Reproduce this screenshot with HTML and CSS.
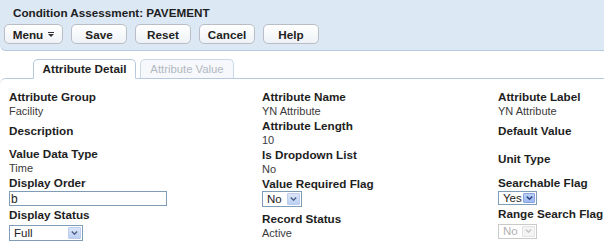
FILE: index.html
```html
<!DOCTYPE html>
<html lang="en">
<head>
    <meta charset="UTF-8">
    <title>Condition Assessment: PAVEMENT</title>
    <link rel="stylesheet" href="styles.css">
</head>
<body>
    <div class="header">
        <div class="title">Condition Assessment: PAVEMENT</div>
        <div class="toolbar">
            <button class="btn menu">Menu
                <svg width="6" height="5" viewBox="0 0 6 5"><rect x="0" y="0" width="6" height="1" fill="#333"/><polygon points="0,2 6,2 3,5" fill="#333"/></svg>
            </button>
            <button class="btn">Save</button>
            <button class="btn">Reset</button>
            <button class="btn">Cancel</button>
            <button class="btn">Help</button>
        </div>
    </div>

    <div class="tabs">
        <div class="tab active">Attribute Detail</div>
        <div class="tab off">Attribute Value</div>
    </div>

    <div class="panel">
        <!-- 左列 -->
        <div class="col">
            <div class="field">
                <div class="label">Attribute Group</div>
                <div class="value">Facility</div>
            </div>
            <div class="field gap5">
                <div class="label">Description</div>
            </div>
            <div class="field gap10">
                <div class="label">Value Data Type</div>
                <div class="value">Time</div>
            </div>
            <div class="field">
                <div class="label">Display Order</div>
                <input class="text-input" type="text" value="b">
            </div>
            <div class="field gap2">
                <div class="label">Display Status</div>
                <div class="select status">
                    <span class="select-value">Full</span>
                    <span class="select-arrow"><svg width="7" height="4" viewBox="0 0 7 4"><polyline points="0.8,0.6 3.5,3.2 6.2,0.6" fill="none" stroke="#4c5f85" stroke-width="1.4"/></svg></span>
                </div>
            </div>
        </div>

        <!-- 中列 -->
        <div class="col">
            <div class="field">
                <div class="label">Attribute Name</div>
                <div class="value">YN Attribute</div>
            </div>
            <div class="field">
                <div class="label">Attribute Length</div>
                <div class="value">10</div>
            </div>
            <div class="field">
                <div class="label">Is Dropdown List</div>
                <div class="value">No</div>
            </div>
            <div class="field">
                <div class="label">Value Required Flag</div>
                <div class="select required">
                    <span class="select-value">No</span>
                    <span class="select-arrow"><svg width="7" height="4" viewBox="0 0 7 4"><polyline points="0.8,0.6 3.5,3.2 6.2,0.6" fill="none" stroke="#4c5f85" stroke-width="1.4"/></svg></span>
                </div>
            </div>
            <div class="field gap5">
                <div class="label">Record Status</div>
                <div class="value">Active</div>
            </div>
        </div>

        <!-- 右列 -->
        <div class="col">
            <div class="field">
                <div class="label">Attribute Label</div>
                <div class="value">YN Attribute</div>
            </div>
            <div class="field gap5">
                <div class="label">Default Value</div>
            </div>
            <div class="field gap15">
                <div class="label">Unit Type</div>
            </div>
            <div class="field gap11">
                <div class="label">Searchable Flag</div>
                <div class="select searchable">
                    <span class="select-value">Yes</span>
                    <span class="select-arrow"><svg width="7" height="4" viewBox="0 0 7 4"><polyline points="0.8,0.6 3.5,3.2 6.2,0.6" fill="none" stroke="#2f4a82" stroke-width="1.5"/></svg></span>
                </div>
            </div>
            <div class="field gap2">
                <div class="label">Range Search Flag</div>
                <div class="select range disabled">
                    <span class="select-value">No</span>
                    <span class="select-arrow"><svg width="7" height="4" viewBox="0 0 7 4"><polyline points="0.8,0.6 3.5,3.2 6.2,0.6" fill="none" stroke="#c4c4c4" stroke-width="1.4"/></svg></span>
                </div>
            </div>
        </div>
    </div>
</body>
</html>
```

FILE: styles.css
```css
body {
    margin: 0;
    font-family: "Liberation Sans", Arial, sans-serif;
    color: #222;
    background: #fff;
}

.header {
    box-sizing: border-box;
    height: 51px;
    padding: 6px 0 0 4px;
    background-color: #dde8f5;
    border-bottom: 1px solid #b6c9de;
    border-bottom-left-radius: 6px;
}

.title {
    padding-left: 9px;
    font-size: 11.7px;
    font-weight: bold;
    line-height: 14px;
    color: #1e1e1e;
}

.toolbar {
    display: flex;
    gap: 8px;
    margin-top: 4px;
}

.btn {
    display: flex;
    align-items: center;
    justify-content: center;
    gap: 5px;
    width: 56px;
    height: 20px;
    padding: 0;
    font-family: inherit;
    font-size: 11.7px;
    font-weight: bold;
    color: #222;
    border: 1px solid #b9bec6;
    border-radius: 5px;
    background: linear-gradient(#ffffff, #eef2f7);
}

.btn.menu {
    width: 59px;
}

/* 标签页 */
.tabs {
    display: flex;
    gap: 4px;
    margin-top: 8px;
    margin-bottom: -1px;
    padding-left: 33px;
    height: 20px;
}

.tab {
    box-sizing: border-box;
    height: 20px;
    border: 1px solid #b6c9de;
    border-radius: 5px 5px 0 0;
    font-size: 11.7px;
    line-height: 18px;
    text-align: center;
}

.tab.active {
    width: 103px;
    font-weight: bold;
    background: #fff;
    border-bottom-color: #fff;
}

.tab.off {
    width: 94px;
    height: 19px;
    border-color: #cad8e7;
    border-bottom: none;
    background: #f6f8fb;
    color: #b3b9c2;
    font-size: 11.3px;
}

.panel {
    display: grid;
    grid-template-columns: 253px 236px 1fr;
    padding: 10.5px 0 0 9px;
    border-top: 1px solid #b6c9de;
    border-top-left-radius: 6px;
}

.col {
    display: flex;
    flex-direction: column;
    white-space: nowrap;
}

.label {
    font-size: 11.7px;
    font-weight: bold;
    line-height: 13px;
    color: #1e1e1e;
}

.value {
    font-size: 11px;
    line-height: 16px;
    color: #3a3a3a;
}

.gap2 { margin-top: 2px; }
.gap5 { margin-top: 5px; }
.gap10 { margin-top: 10px; }
.gap11 { margin-top: 11.5px; }
.gap15 { margin-top: 15px; }

.text-input {
    display: block;
    box-sizing: border-box;
    margin-top: 2.5px;
    width: 158px;
    height: 15px;
    padding: 0 0 0 1px;
    border: 1px solid #7f9db9;
    font-family: inherit;
    font-size: 12px;
    color: #222;
    outline: none;
}

/* 下拉框 */
.select {
    display: flex;
    box-sizing: border-box;
    padding: 1px;
    border: 1px solid #7f9db9;
    background: #fff;
    font-size: 11.5px;
    color: #222;
}

.select-value {
    flex: 1;
    padding-left: 3px;
    display: flex;
    align-items: center;
}

.select-arrow {
    display: flex;
    align-items: center;
    justify-content: center;
    box-sizing: border-box;
    width: 13px;
    border: 1px solid #bccdee;
    border-radius: 1px;
    background: linear-gradient(#dbe5f9, #bccff3);
}

.select.status {
    width: 74px;
    height: 16px;
    margin-top: 3.5px;
}

.select.required {
    width: 40px;
    height: 16px;
    margin-top: 1.5px;
}

.select.searchable {
    width: 39px;
    height: 14px;
    margin-top: 1.5px;
}

.select.searchable .select-arrow {
    width: 12px;
    border-color: #86a3e2;
    background: linear-gradient(#bcd0f6, #9fbaf0);
}

.select.range {
    width: 39px;
    height: 15px;
    margin-top: 4px;
}

.select.disabled {
    border-color: #cacaca;
    color: #b0b0b0;
}

.select.disabled .select-arrow {
    border-color: #e2e2e2;
    background: #f4f4f4;
}
```
